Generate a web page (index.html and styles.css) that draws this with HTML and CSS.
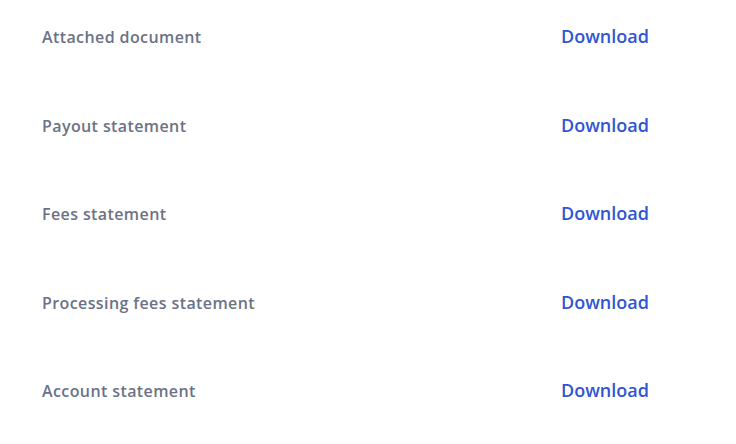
FILE: index.html
```html
<!DOCTYPE html>
<html>
<head>
<meta charset="utf-8">
<link rel="stylesheet" href="styles.css">
</head>
<body>
<div class="list">
  <div class="row"><span class="label">Attached document</span><a class="dl" href="#">Download</a></div>
  <div class="row"><span class="label">Payout statement</span><a class="dl" href="#">Download</a></div>
  <div class="row"><span class="label">Fees statement</span><a class="dl" href="#">Download</a></div>
  <div class="row"><span class="label">Processing fees statement</span><a class="dl" href="#">Download</a></div>
  <div class="row"><span class="label">Account statement</span><a class="dl" href="#">Download</a></div>
</div>
</body>
</html>
```
FILE: styles.css
```css
html, body {
  margin: 0;
  padding: 0;
  background: #ffffff;
  font-family: "Open Sans", "Noto Sans", sans-serif;
}
.list {
  display: flex;
  flex-direction: column;
  gap: 64.5px;
  padding: 24px 0 0 42px;
}
.row {
  display: flex;
  align-items: center;
  height: 24px;
}
.label {
  width: 519px;
  padding-top: 2px;
  font-size: 16px;
  font-weight: 600;
  letter-spacing: 0.4px;
  color: #6b7286;
}
.dl {
  font-size: 18px;
  font-weight: 600;
  color: #2f55d4;
  text-decoration: none;
}
```
